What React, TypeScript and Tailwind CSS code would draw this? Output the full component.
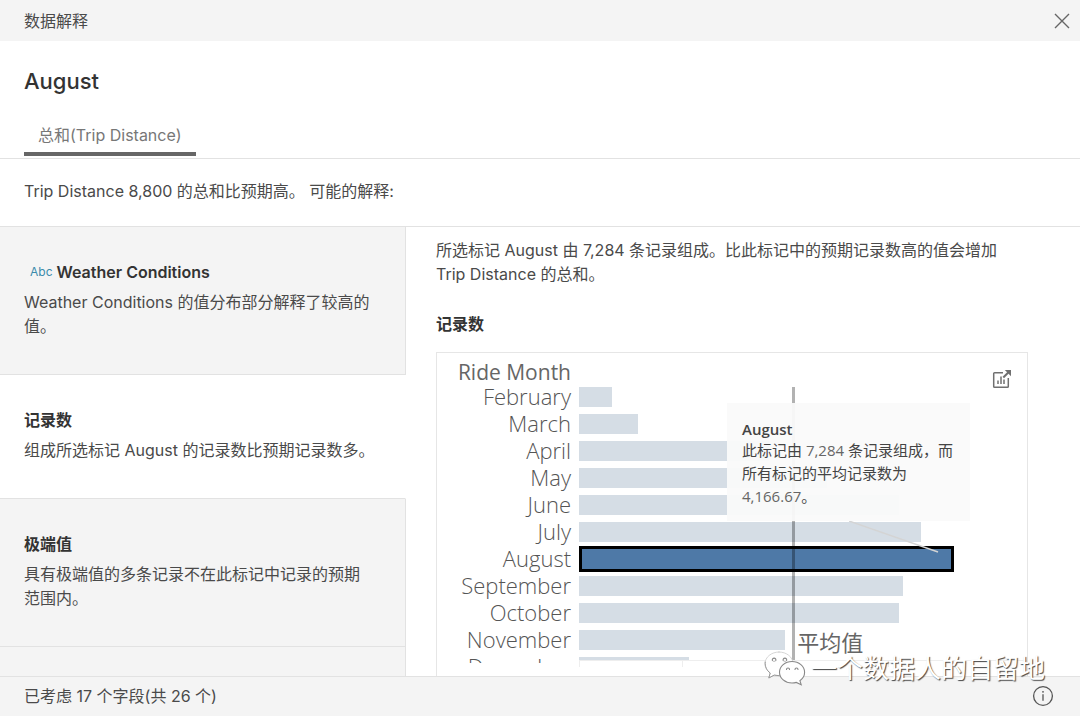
import { useState } from 'react'
import clsx from 'clsx'

interface Explanation {
  id: string
  title: string
  text: string
  isField?: boolean
}

const EXPLANATIONS: Explanation[] = [
  {
    id: 'weather',
    title: 'Weather Conditions',
    text: 'Weather Conditions 的值分布部分解释了较高的值。',
    isField: true,
  },
  { id: 'records', title: '记录数', text: '组成所选标记 August 的记录数比预期记录数多。' },
  { id: 'extreme', title: '极端值', text: '具有极端值的多条记录不在此标记中记录的预期范围内。' },
]

const MONTHS = [
  { name: 'February', records: 650 },
  { name: 'March', records: 1140 },
  { name: 'April', records: 3690 },
  { name: 'May', records: 4820 },
  { name: 'June', records: 6220 },
  { name: 'July', records: 6650 },
  { name: 'August', records: 7284 },
  { name: 'September', records: 6290 },
  { name: 'October', records: 6220 },
  { name: 'November', records: 4010 },
  { name: 'December', records: 2140 },
]

const AVERAGE = 4166.67
const AXIS_MAX = 8710
const TICKS = [0, 2000, 4000, 6000, 8000]

const pct = (value: number) => `${(value / AXIS_MAX) * 100}%`

function CloseIcon() {
  return (
    <svg viewBox="0 0 16 16" className="h-4 w-4" fill="none" stroke="#666" strokeWidth="1.4">
      <path d="M1 1l14 14M15 1L1 15" />
    </svg>
  )
}

function OpenSheetIcon() {
  return (
    <svg viewBox="0 0 20 20" className="h-5 w-5" fill="none" stroke="#707070" strokeWidth="1.5">
      <path d="M11 3.700H2.600a.9.9 0 0 0-.9.9v12.800c0 .5.4.9.9.9h12.800c.5 0 .9-.4.9-.9V9" />
      <path d="M6 11.500V15M9 7.500V15M12 10.500V15" />
      <path d="M11.300 8.500L17.500 2.300" strokeWidth="2" />
      <path d="M12.800 1H19v6.200z" fill="#707070" stroke="none" />
    </svg>
  )
}

function InfoIcon() {
  return (
    <svg viewBox="0 0 22 22" className="h-[22px] w-[22px]" fill="none" stroke="#555" strokeWidth="1.3">
      <circle cx="11" cy="11" r="9.400" />
      <path d="M11 9.300v6.400" />
      <circle cx="11" cy="6.800" r="0.900" fill="#555" stroke="none" />
    </svg>
  )
}

function WeChatIcon() {
  return (
    <svg viewBox="0 0 44 38" className="h-[38px] w-11" fill="#fff" strokeLinecap="round">
      <path d="M16 2C8.300 2 2 7.200 2 13.800c0 3.700 2 7 5.200 9.200L5.800 28l5.400-2.900c1.500.4 3.100.6 4.800.6 7.700 0 14-5.200 14-11.900S23.700 2 16 2z" stroke="#ccc" strokeWidth="0.8" />
      <path d="M2.200 12c-.5 4.600 1.600 8.500 5 11L5.800 28l5.400-2.900 5 .6" fill="none" stroke="#999" strokeWidth="1" />
      <path d="M29 11.500c-6.900 0-12.500 4.800-12.500 10.800S22.100 33 29 33c1.500 0 3-.2 4.300-.6l4.900 2.300-1.300-4c2.900-2 4.700-5 4.700-8.400 0-6-5.700-10.800-12.600-10.800z" stroke="#888" strokeWidth="1.1" />
      <g fill="none" stroke="#888" strokeWidth="1.1">
        <path d="M9.400 10.500a1.800 1.800 0 1 1 3.400 0M20.200 10.500a1.800 1.800 0 1 1 3.400 0" />
        <path d="M10.300 11.300h1.600M21.100 11.300h1.600" stroke="#bbb" />
        <path d="M23.500 19.500a1.500 1.500 0 1 1 3 0M32 19.500a1.500 1.500 0 1 1 3 0" />
      </g>
    </svg>
  )
}

function ExplanationItem({ item, selected, onSelect }: {
  item: Explanation
  selected: boolean
  onSelect: () => void
}) {
  return (
    <button
      onClick={onSelect}
      className={clsx(
        'block w-full border-r border-b border-b-[#e2e2e2] pt-[33px] pr-[30px] pb-9 pl-6 text-left',
        selected ? 'border-r-transparent bg-white' : 'border-r-[#e2e2e2] bg-[#f4f4f4]',
      )}
    >
      <span className="flex items-center text-[#333]">
        {item.isField && <span className="mr-1 pl-1.5 text-xs text-[#3b8bab]">Abc</span>}
        <span className="font-semibold">{item.title}</span>
      </span>
      <span className="mt-1.5 block">{item.text}</span>
    </button>
  )
}

function RecordsChart() {
  return (
    <div className="relative border border-[#e6e6e6] pt-2 pb-10">
      <h3 className="w-[134px] text-right font-['Open_Sans','Noto_Sans_CJK_SC',sans-serif] text-[21px] leading-[22px] font-medium text-[#666]">
        Ride Month
      </h3>
      <button aria-label="打开工作表" className="absolute top-4 right-[15px]">
        <OpenSheetIcon />
      </button>

      <div className="flex">
        {/* Month labels */}
        <ul className="h-[280px] w-[142px] shrink-0 overflow-hidden pr-2 text-right font-['Open_Sans','Noto_Sans_CJK_SC',sans-serif] text-[22px] leading-[27px] font-light text-[#555]">
          {MONTHS.map(m => <li key={m.name}>{m.name}</li>)}
        </ul>

        {/* Bars */}
        <div className="relative min-w-0 flex-1">
          <div className="h-[278px] overflow-hidden border-b border-[#eee]">
            {MONTHS.map(m => (
              <div key={m.name} className="flex h-[27px] items-center">
                <div
                  className={clsx(
                    m.name === 'August' ? 'h-[26px] border-3 border-black bg-[#4e79a7]' : 'h-5 bg-[#d5dde5]',
                  )}
                  style={{ width: pct(m.records) }}
                />
              </div>
            ))}
          </div>
          {TICKS.map(t => (
            <div key={t} className="absolute top-[278px] h-1.5 w-px bg-[#eee]" style={{ left: pct(t) }} />
          ))}

          {/* Average line */}
          <div className="absolute top-1 h-[273px] w-[3px] -translate-x-px bg-black/30" style={{ left: pct(AVERAGE) }} />
          <div
            className="absolute top-[247px] pl-1 text-[22px] leading-[27px] whitespace-nowrap text-[#666]"
            style={{ left: pct(AVERAGE) }}
          >
            平均值
          </div>
        </div>
      </div>

      {/* Annotation on the August mark */}
      <div className="absolute top-[50px] left-[290px] w-[243px] bg-[#fafafa]/95 px-[15px] pt-4 pb-[13px] font-['Open_Sans','Noto_Sans_CJK_SC',sans-serif] text-[15px] leading-[23px] text-[#444]">
        <strong className="block leading-5 font-semibold">August</strong>
        此标记由 <span className="text-[#666]">7,284</span> 条记录组成，而所有标记的平均记录数为 <span className="text-[#666]">4,166.67</span>。
        <svg viewBox="0 0 90 32" className="absolute top-full left-[122px] h-8 w-[90px]" stroke="#d4d4d4" strokeWidth="1.4">
          <path d="M0 0L89 31" />
        </svg>
      </div>
    </div>
  )
}

export default function App() {
  const [selected, setSelected] = useState('records')

  return (
    <div className="relative flex h-screen flex-col overflow-hidden bg-white font-['Inter','Noto_Sans_CJK_SC',sans-serif] text-base leading-6 text-[#4a4a4a]">
      <header className="flex h-[41px] shrink-0 items-center justify-between bg-[#f4f4f4] pr-2.5 pl-6">
        <span>数据解释</span>
        <button aria-label="关闭"><CloseIcon /></button>
      </header>

      <div className="shrink-0 border-b border-[#e2e2e2] px-6 pt-6">
        <h1 className="text-[22px] leading-8 font-medium text-[#333]">August</h1>
        <div role="tablist" className="mt-[26px] mb-0.5 flex">
          <button role="tab" aria-selected="true" className="border-b-4 border-[#666] px-3.5 pb-[5px] text-[#777]">
            总和(Trip Distance)
          </button>
        </div>
      </div>

      <p className="shrink-0 border-b border-[#e2e2e2] px-6 pt-5 pb-[23px]">
        Trip Distance 8,800 的总和比预期高。 可能的解释:
      </p>

      <main className="flex min-h-0 flex-1 overflow-hidden">
        <nav className="w-[406px] shrink-0">
          {EXPLANATIONS.map(item => (
            <ExplanationItem
              key={item.id}
              item={item}
              selected={item.id === selected}
              onSelect={() => setSelected(item.id)}
            />
          ))}
          <div className="h-40 border-r border-[#e2e2e2] bg-[#f4f4f4]" />
        </nav>

        <section className="min-w-0 flex-1 pt-[11px] pr-[52px] pl-[30px]">
          <p>所选标记 August 由 7,284 条记录组成。比此标记中的预期记录数高的值会增加 Trip Distance 的总和。</p>
          <h2 className="mt-[26px] mb-4 font-semibold text-[#333]">记录数</h2>
          <RecordsChart />
        </section>
      </main>

      <footer className="flex h-10 shrink-0 items-center justify-between border-t border-[#e2e2e2] bg-[#f4f4f4] pr-[26px] pb-0.5 pl-6">
        <span>已考虑 17 个字段(共 26 个)</span>
        <button aria-label="信息"><InfoIcon /></button>
      </footer>

      {/* Channel watermark */}
      <div className="pointer-events-none absolute right-[35px] bottom-7 flex items-center gap-1">
        <WeChatIcon />
        <span className="text-[26px] leading-[38px] text-white [text-shadow:1px_1px_1px_#444]">一个数据人的自留地</span>
      </div>
    </div>
  )
}
